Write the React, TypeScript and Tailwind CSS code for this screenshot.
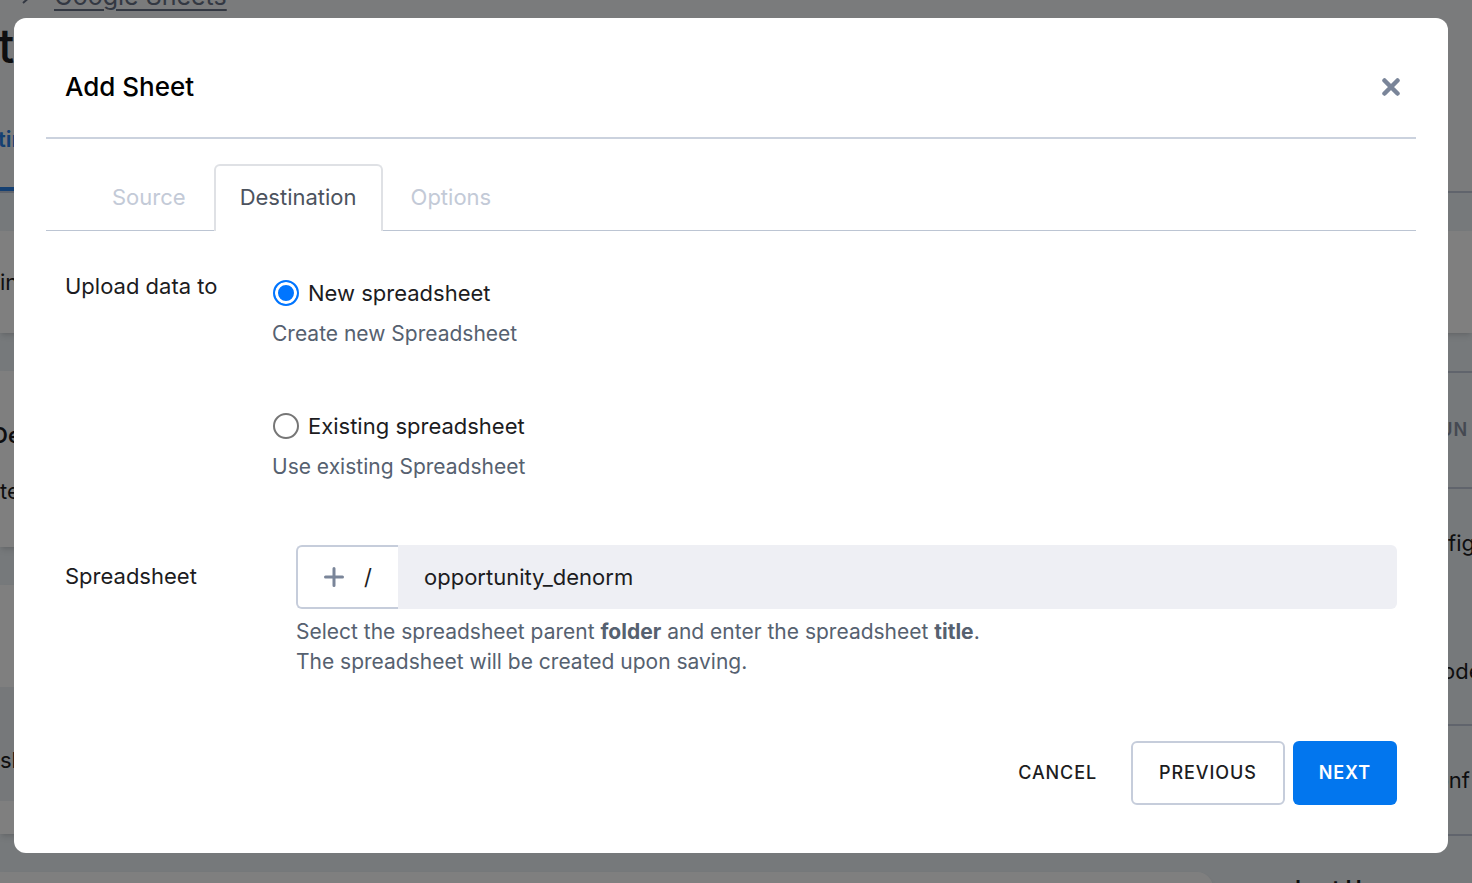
import { useState } from 'react';

interface TargetOption {
  id: string;
  label: string;
  hint: string;
}

const tabs = ['Source', 'Destination', 'Options'];

const targets: TargetOption[] = [
  { id: 'new', label: 'New spreadsheet', hint: 'Create new Spreadsheet' },
  { id: 'existing', label: 'Existing spreadsheet', hint: 'Use existing Spreadsheet' },
];

function PageBehind() {
  return (
    <div className="h-screen overflow-hidden bg-[#ecf2f6] text-[22px] leading-8 text-[#1c1c21]" aria-hidden="true">
      {/* Page header */}
      <div className="h-[193px] overflow-hidden border-b-2 border-[#c0c8d8] bg-[#f5f7f9]">
        <div className="-mt-5 flex h-8 items-center gap-5 pl-5 text-[#667085]">
          <svg className="h-5 w-3.5" viewBox="0 0 14 20" fill="none" stroke="currentColor" strokeWidth={2}>
            <path d="M3 3l8 7-8 7" />
          </svg>
          <span className="text-[25px] underline decoration-2 underline-offset-4">Google Sheets</span>
        </div>
        <div className="-ml-0.5 h-[68px] text-5xl leading-[68px] font-medium">t</div>
        <div className="flex">
          <div className="h-[112px] w-8 border-b-[5px] border-[#2a80e4] pt-[43px] text-[#2a80e4]">
            <div className="-ml-0.5 font-semibold">tin</div>
          </div>
        </div>
      </div>

      <div className="mt-[38px] flex h-[102px] items-center bg-white shadow-md">in</div>

      <div className="mt-[38px] flex">
        {/* Cards */}
        <div className="min-w-0 flex-1">
          <div className="h-44 rounded-r-2xl bg-white pt-12 shadow-md">
            <div className="-ml-2 font-semibold">De</div>
            <div className="mt-6">te</div>
          </div>
          <div className="mt-[38px] h-[249px] rounded-r-2xl bg-white pt-[102px] shadow-md">
            <div className="flex h-[114px] items-center bg-[#edf0f4] pt-8">sl</div>
          </div>
          <div className="mt-[38px] h-20 rounded-r-2xl bg-white shadow-md" />
        </div>

        {/* Sidebar */}
        <div className="w-[259px] border-t-2 border-[#c0c8d8] whitespace-nowrap">
          <div className="flex h-[116px] items-center justify-end border-b-2 border-[#c0c8d8] pr-1 text-lg font-semibold tracking-wider text-[#8a93a5]">
            RUN
          </div>
          <div className="flex h-[237px] flex-col items-end gap-24 border-b-2 border-[#c0c8d8] pt-[38px]">
            <div className="w-6">fig</div>
            <div className="w-[30px]">ode</div>
          </div>
          <div className="flex h-[110px] items-center justify-end border-b-2 border-[#c0c8d8] pr-0.5">onf</div>
          <div className="pt-9 pl-[82px] font-semibold">Last U</div>
        </div>
      </div>
    </div>
  );
}

export default function App() {
  const [target, setTarget] = useState('new');
  const [title, setTitle] = useState('opportunity_denorm');

  return (
    <div className="font-['Inter',sans-serif]">
      <PageBehind />

      <div className="fixed inset-0 overflow-y-auto bg-black/50 pt-[18px] pr-6 pl-[14px]">
        <div role="dialog" aria-labelledby="dialog-title" className="rounded-xl bg-white px-8 pb-12 text-[22px] leading-[30px] text-[#1c1c21]">
          {/* Header */}
          <header className="flex items-center justify-between border-b-2 border-[#cbd2de] pt-[49px] pr-4 pb-[30px] pl-[19px]">
            <h1 id="dialog-title" className="text-[26px] leading-10 font-medium text-black">
              Add Sheet
            </h1>
            <button type="button" aria-label="Close" className="text-[#7a8599]">
              <svg className="size-[18px]" viewBox="0 0 18 18" stroke="currentColor" strokeWidth={4.5} strokeLinecap="round">
                <path d="M2.5 2.5l13 13M15.5 2.5l-13 13" />
              </svg>
            </button>
          </header>

          {/* Tabs */}
          <nav className="mt-[25px] flex border-b border-[#bcc5d3] pl-[38px]">
            {tabs.map((tab) => (
              <button
                key={tab}
                type="button"
                className={
                  tab === 'Destination'
                    ? '-mb-px rounded-t-md border-2 border-b-0 border-[#dfe1e5] bg-white px-6 pt-4 pb-[19px] text-[#4c535e]'
                    : 'px-7 pb-px text-[#c3cad7]'
                }
              >
                {tab}
              </button>
            ))}
          </nav>

          <form className="px-[19px] pt-10" onSubmit={(e) => e.preventDefault()}>
            <fieldset className="flex">
              <legend className="float-left w-[207px]">Upload data to</legend>
              <div className="flex flex-col gap-[62px] pt-[7px]">
                {targets.map((option) => (
                  <div key={option.id}>
                    <label className="flex items-center gap-[9px] pl-px">
                      <input
                        type="radio"
                        name="target"
                        checked={target === option.id}
                        onChange={() => setTarget(option.id)}
                        className="size-[26px] appearance-none rounded-full border-2 border-[#767676] bg-white checked:border-[#0075ff] checked:bg-[#0075ff] checked:shadow-[inset_0_0_0_3px_white]"
                      />
                      {option.label}
                    </label>
                    <p className="mt-[11px] text-[21px] text-[#566170]">{option.hint}</p>
                  </div>
                ))}
              </div>
            </fieldset>

            <div className="mt-[63px] flex">
              <label htmlFor="title" className="w-[231px] shrink-0 pt-4">
                Spreadsheet
              </label>
              <div className="min-w-0 flex-1">
                <div className="flex h-16">
                  <button
                    type="button"
                    aria-label="Select folder"
                    className="flex w-[102px] items-center gap-5 rounded-l-md border-2 border-r-0 border-[#c6cddb] pl-[26px]"
                  >
                    <svg className="size-5 text-[#7a8599]" viewBox="0 0 20 20" stroke="currentColor" strokeWidth={3} strokeLinecap="round">
                      <path d="M10 1.5v17M1.5 10h17" />
                    </svg>
                    /
                  </button>
                  <input
                    id="title"
                    type="text"
                    value={title}
                    onChange={(e) => setTitle(e.target.value)}
                    className="min-w-0 flex-1 rounded-r-md bg-[#eeeff4] px-[26px] outline-none"
                  />
                </div>
                <p className="mt-2 text-[21px] text-[#566170]">
                  Select the spreadsheet parent <strong>folder</strong> and enter the spreadsheet <strong>title</strong>.
                  <br />
                  The spreadsheet will be created upon saving.
                </p>
              </div>
            </div>

            {/* Actions */}
            <div className="mt-16 flex h-16 justify-end gap-2 text-lg font-medium">
              <button type="button" className="px-[26px] tracking-wider">
                CANCEL
              </button>
              <button type="button" className="rounded-md border-2 border-[#c6cddb] px-[26px] tracking-wider">
                PREVIOUS
              </button>
              <button type="submit" className="rounded-md bg-[#0276ee] px-[26px] font-semibold tracking-wider text-white">
                NEXT
              </button>
            </div>
          </form>
        </div>
      </div>
    </div>
  );
}
